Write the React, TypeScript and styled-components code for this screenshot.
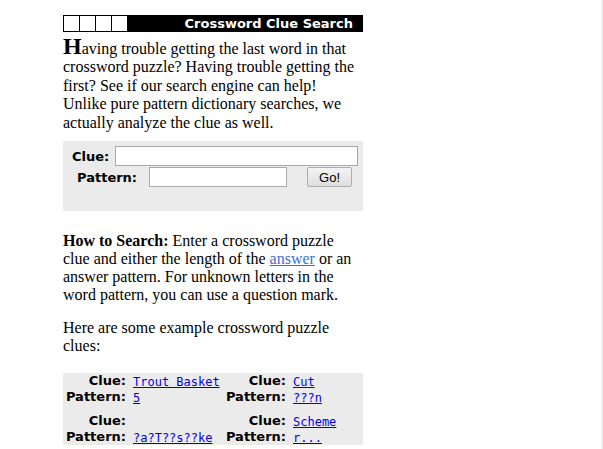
import React from "react";
import styled, { createGlobalStyle } from "styled-components";

const Global = createGlobalStyle`
  html, body { margin: 0; padding: 0; background: #fff; }
  body { font-family: "Liberation Serif", "Times New Roman", serif; color: #000; }
`;

const Page = styled.div`
  display: flex;
  min-height: 449px;
  width: 603px;
`;

const Main = styled.main`
  flex: 1;
  padding: 15px 0 0 63px;
`;

const Edge = styled.div`
  width: 2px;
  background: #efefef;
`;

const Column = styled.div`
  width: 300px;
  display: flex;
  flex-direction: column;
`;

const Header = styled.div`
  display: flex;
  height: 17px;
  background: #000;
  align-items: stretch;
`;

const Boxes = styled.div`
  display: flex;
  gap: 1px;
  padding: 1px;
  background: #000;
`;

const Box = styled.span`
  width: 15px;
  background: #fff;
`;

const Title = styled.div`
  flex: 1;
  text-align: right;
  padding-right: 10px;
  color: #fff;
  font-family: "DejaVu Sans", Verdana, sans-serif;
  font-weight: bold;
  font-size: 13px;
  line-height: 17px;
`;

const Para = styled.p<{ $top?: number; $bottom?: number; $lh?: string }>`
  margin: ${(p) => p.$top ?? 0}px 0 ${(p) => p.$bottom ?? 0}px;
  font-size: 16px;
  line-height: ${(p) => p.$lh ?? "normal"};
`;

const Cap = styled.span`
  font-size: 24px;
  font-weight: bold;
`;

const FormBox = styled.form`
  background: #ebebeb;
  height: 70px;
  box-sizing: border-box;
  padding-top: 5px;
  display: flex;
  flex-direction: column;
  gap: 1px;
`;

const FormRow = styled.div<{ $indent: number; $gap: number }>`
  display: flex;
  align-items: center;
  padding-left: ${(p) => p.$indent}px;
  gap: ${(p) => p.$gap}px;
`;

const Label = styled.label`
  font-family: "DejaVu Sans", Verdana, sans-serif;
  font-weight: bold;
  font-size: 13px;
`;

const TextInput = styled.input<{ $w: number }>`
  width: ${(p) => p.$w}px;
  height: 20px;
  box-sizing: border-box;
  border: 1px solid #a9a9a9;
  background: #fff;
  padding: 0 2px;
  margin: 0;
`;

const GoButton = styled.button`
  margin-left: 8px;
  width: 45px;
  height: 20px;
  box-sizing: border-box;
  border: 1px solid #adadad;
  border-radius: 2px;
  background: linear-gradient(#f4f4f4, #dedede);
  font-family: "Liberation Sans", Arial, sans-serif;
  font-size: 13px;
  color: #000;
  padding: 0;
`;

const Strong = styled.b``;

const SoftLink = styled.a`
  color: #3a6fd6;
  text-decoration: underline;
`;

const Examples = styled.div`
  background: #ebebeb;
  display: flex;
  flex-direction: column;
  gap: 8px;
  padding-bottom: 0;
`;

const Group = styled.div`
  display: grid;
  grid-template-columns: 63px 94px 66px 1fr;
  grid-auto-rows: 16px;
  align-items: center;
`;

const ExLabel = styled.span`
  text-align: right;
  font-family: "DejaVu Sans", Verdana, sans-serif;
  font-weight: bold;
  font-size: 13px;
  line-height: 16px;
  white-space: nowrap;
`;

const ExValue = styled.span`
  padding-left: 7px;
  line-height: 16px;
  white-space: nowrap;
`;

const MonoLink = styled.a`
  font-family: "DejaVu Sans Mono", "Courier New", monospace;
  font-size: 12px;
  color: #0000ee;
  text-decoration: underline;
`;

type Ex = { clue: string; pattern: string };

const rows: [Ex, Ex][] = [
  [
    { clue: "Trout Basket", pattern: "5" },
    { clue: "Cut", pattern: "???n" },
  ],
  [
    { clue: "", pattern: "?a?T??s??ke" },
    { clue: "Scheme", pattern: "r..." },
  ],
];

export default function App() {
  return (
    <>
      <Global />
      <Page>
        <Main>
          <Column>
            <Header>
              <Boxes>
                <Box />
                <Box />
                <Box />
                <Box />
              </Boxes>
              <Title>Crossword Clue Search</Title>
            </Header>
            <Para $top={5} $bottom={9} $lh="18.4px">
              <Cap>H</Cap>aving trouble getting the last word in that crossword
              puzzle? Having trouble getting the first? See if our search engine
              can help! Unlike pure pattern dictionary searches, we actually
              analyze the clue as well.
            </Para>
            <FormBox onSubmit={(e) => e.preventDefault()}>
              <FormRow $indent={9} $gap={6}>
                <Label>Clue:</Label>
                <TextInput $w={243} />
              </FormRow>
              <FormRow $indent={14} $gap={12}>
                <Label>Pattern:</Label>
                <TextInput $w={138} />
                <GoButton type="submit">Go!</GoButton>
              </FormRow>
            </FormBox>
            <Para $top={21} $bottom={15}>
              <Strong>How to Search:</Strong> Enter a crossword puzzle clue and
              either the length of the <SoftLink href="#">answer</SoftLink> or
              an answer pattern. For unknown letters in the word pattern, you
              can use a question mark.
            </Para>
            <Para $bottom={18}>
              Here are some example crossword puzzle clues:
            </Para>
            <Examples>
              {rows.map((pair, i) => (
                <Group key={i}>
                  {pair.map((ex, j) => (
                    <React.Fragment key={`c${j}`}>
                      <ExLabel style={{ gridRow: 1 }}>Clue:</ExLabel>
                      <ExValue style={{ gridRow: 1 }}>
                        {ex.clue && <MonoLink href="#">{ex.clue}</MonoLink>}
                      </ExValue>
                    </React.Fragment>
                  ))}
                  {pair.map((ex, j) => (
                    <React.Fragment key={`p${j}`}>
                      <ExLabel style={{ gridRow: 2 }}>Pattern:</ExLabel>
                      <ExValue style={{ gridRow: 2 }}>
                        <MonoLink href="#">{ex.pattern}</MonoLink>
                      </ExValue>
                    </React.Fragment>
                  ))}
                </Group>
              ))}
            </Examples>
          </Column>
        </Main>
        <Edge />
      </Page>
    </>
  );
}
